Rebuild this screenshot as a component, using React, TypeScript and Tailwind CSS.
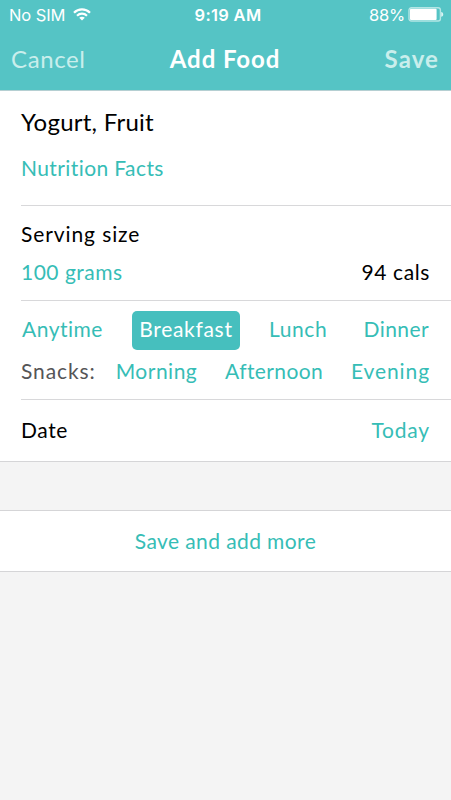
import { useState } from "react";

type Meal = { label: string; style: string };

const mainMeals: Meal[] = [
  { label: "Anytime", style: "tracking-[0.5px]" },
  { label: "Breakfast", style: "tracking-[0.7px]" },
  { label: "Lunch", style: "tracking-[0.6px]" },
  { label: "Dinner", style: "tracking-[0.4px]" },
];

const snackMeals: Meal[] = [
  { label: "Morning", style: "tracking-[0.5px]" },
  { label: "Afternoon", style: "tracking-[0.4px]" },
  { label: "Evening", style: "tracking-[0.9px]" },
];

function WifiIcon() {
  return (
    <svg width="18" height="13" viewBox="0 0 18 13" fill="none" stroke="white">
      <path d="M1 4.7C5.4 0.2 12.6 0.2 17 4.7" strokeWidth="2.2" />
      <path d="M4 7.7C6.8 4.9 11.2 4.9 14 7.7" strokeWidth="2.1" />
      <path d="M9 12.6L6.2 9.8C7.8 8.3 10.2 8.3 11.8 9.8Z" fill="white" stroke="none" />
    </svg>
  );
}

function BatteryIcon() {
  return (
    <svg width="36" height="15" viewBox="0 0 36 15" fill="none">
      <rect x="1" y="0.8" width="31.4" height="13.2" rx="2.3" stroke="#b4e6e5" strokeWidth="1.4" />
      <rect x="2" y="1.8" width="26.6" height="11.2" rx="1" fill="white" />
      <path d="M33.2 5C34.5 5.2 35.2 6.1 35.2 7.4C35.2 8.7 34.5 9.6 33.2 9.8Z" fill="#dbf4f3" />
    </svg>
  );
}

export default function App() {
  const [selected, setSelected] = useState("Breakfast");

  const renderMeal = (meal: Meal) => (
    <button
      key={meal.label}
      onClick={() => setSelected(meal.label)}
      className={`-mx-[7px] h-[39px] rounded-[5px] px-[7px] pb-[3px] whitespace-nowrap ${meal.style} ${
        selected === meal.label ? "bg-[#46bfbe] text-white" : "text-[#36bdb6]"
      }`}
    >
      {meal.label}
    </button>
  );

  return (
    <div className="h-[800px] w-[451px] overflow-hidden bg-[#f4f4f4] font-['Lato',sans-serif] text-[21px] leading-[26px] text-black">
      <header className="h-[91px] border-b border-[#b5cfd2] bg-[#55c4c5] text-white">
        {/* Status bar */}
        <div className="grid h-[29px] grid-cols-3 items-center pr-[7px] pl-[9px] font-['Inter',sans-serif] text-[16.5px]">
          <div className="flex items-center gap-[8px]">
            <span className="tracking-[-0.1px]">No SIM</span>
            <WifiIcon />
          </div>
          <span className="pl-[3px] text-center font-semibold tracking-[0.3px]">9:19 AM</span>
          <div className="flex items-center justify-end gap-[3px]">
            <span className="tracking-[-0.2px]">88%</span>
            <BatteryIcon />
          </div>
        </div>

        {/* Navigation bar */}
        <div className="grid h-[60px] grid-cols-3 items-center pr-[12px] pl-[11px] text-[24px]">
          <button className="text-left tracking-[0.6px] text-[#c9eeec]">Cancel</button>
          <h1 className="text-center font-bold tracking-[0.9px] whitespace-nowrap">Add Food</h1>
          <button className="text-right font-bold tracking-[1.1px] text-[#c9eeec]">Save</button>
        </div>
      </header>

      <main>
        <div className="bg-white pl-[21px]">
          <section className="h-[115px] border-b border-[#d8d8da] pt-[17px]">
            <h2 className="text-[24px] leading-[28px] tracking-[0.25px]">Yogurt, Fruit</h2>
            <button className="mt-[19px] block tracking-[0.4px] text-[#36bdb6]">Nutrition Facts</button>
          </section>

          <section className="h-[95px] border-b border-[#d8d8da] pt-[15px] pr-[21px]">
            <p className="tracking-[0.9px]">Serving size</p>
            <div className="mt-[12px] flex justify-between">
              <button className="tracking-[0.5px] text-[#36bdb6]">100 grams</button>
              <span className="tracking-[0.6px]">94 cals</span>
            </div>
          </section>

          <section className="h-[99px] border-b border-[#d8d8da] pt-[10px] pr-[21px]">
            <div className="flex justify-between pr-px pl-px">{mainMeals.map(renderMeal)}</div>
            <div className="mt-[3px] flex items-center">
              <span className="pb-[3px] tracking-[0.9px] text-[#555557]">Snacks:</span>
              <div className="ml-[20px] flex flex-1 justify-between">{snackMeals.map(renderMeal)}</div>
            </div>
          </section>
        </div>

        <section className="flex h-[62px] items-center justify-between border-b border-[#d5d5d7] bg-white pr-[21px] pb-[2px] pl-[21px]">
          <span className="tracking-[0.6px]">Date</span>
          <button className="tracking-[0.8px] text-[#36bdb6]">Today</button>
        </section>

        <button className="mt-[48px] block h-[62px] w-full border-y border-[#d5d5d7] bg-white tracking-[0.4px] text-[#36bdb6]">
          Save and add more
        </button>
      </main>
    </div>
  );
}
